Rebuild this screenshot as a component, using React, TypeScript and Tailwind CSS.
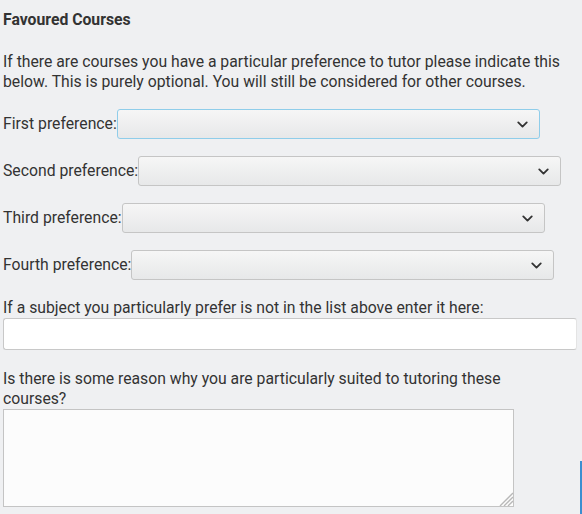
import { ChevronDown } from 'lucide-react'

const PREFS = ['First', 'Second', 'Third', 'Fourth']

function Select({ focused }: { focused?: boolean }) {
  return (
    <div
      className={`relative h-[30px] w-[423px] rounded-[3px] border bg-gradient-to-b from-[#f6f6f6] to-[#e7e8e9] ${
        focused ? 'border-[#8fcdea]' : 'border-[#c5c5c5]'
      }`}
    >
      <ChevronDown className="absolute right-[8px] top-[6px] text-[#333]" size={17} strokeWidth={2.6} />
    </div>
  )
}

export default function App() {
  return (
    <div className="relative h-[514px] w-[582px] overflow-hidden bg-[#eff0f2] pl-[3px] font-['Roboto',sans-serif] text-[15.75px] leading-[20px] text-[#333]">
      <h2 className="pt-[10px] text-[15.75px] font-bold leading-[20px]">Favoured Courses</h2>

      <p className="mt-[22px]">
        If there are courses you have a particular preference to tutor please indicate this below. This is purely optional. You will still be considered for other courses.
      </p>

      <div className="mt-[17px] flex flex-col gap-[17px]">
        {PREFS.map((p, i) => (
          <div key={p} className="flex items-center">
            <span>{p} preference:</span>
            <Select focused={i === 0} />
          </div>
        ))}
      </div>

      <p className="mt-[18px]">If a subject you particularly prefer is not in the list above enter it here:</p>
      <div className="mt-0 h-[32px] w-[574px] rounded-[3px] border border-[#c8c8c8] border-r-[#e4e4e4] bg-white" />

      <p className="mt-[19px] w-[540px]">Is there is some reason why you are particularly suited to tutoring these courses?</p>
      <div className="relative mt-0 h-[98px] w-[511px] border border-[#c4c4c4] bg-[#fcfcfc]">
        <svg className="absolute bottom-0 right-0" width="15" height="15" viewBox="0 0 15 15">
          <g stroke="#b8b8b8" strokeWidth="1.3">
            <line x1="15" y1="2" x2="2" y2="15" />
            <line x1="15" y1="6" x2="6" y2="15" />
            <line x1="15" y1="10" x2="10" y2="15" />
          </g>
        </svg>
      </div>

      <div className="absolute right-0 top-[461px] h-[53px] w-[2px] bg-[#3b8fd0]" />
    </div>
  )
}
